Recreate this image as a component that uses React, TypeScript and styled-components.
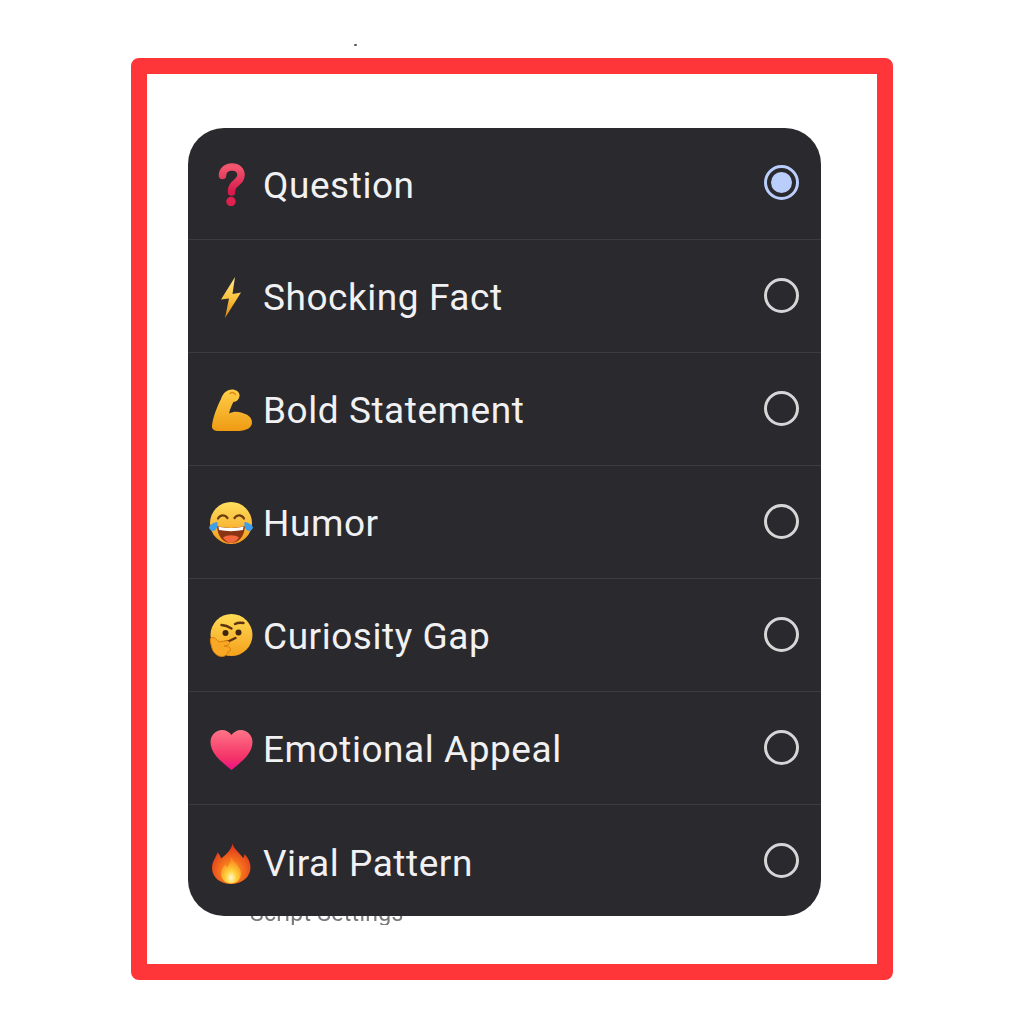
import React from 'react';
import styled, { createGlobalStyle } from 'styled-components';

const GlobalStyle = createGlobalStyle`
  html, body {
    margin: 0;
    padding: 0;
    background: #ffffff;
    font-family: Roboto, "Liberation Sans", sans-serif;
  }
`;

function QuestionEmoji() {
  return (
    <svg width="44" height="44" viewBox="0 0 44 44">
      <defs>
        <linearGradient id="qm" x1="0" y1="0" x2="0" y2="1">
          <stop offset="0" stopColor="#f2566e" />
          <stop offset="1" stopColor="#d81a4c" />
        </linearGradient>
      </defs>
      <path
        d="M13.5 13.5C13.5 8 18 5 23 5c5.5 0 9 3.5 9 8 0 4.5-3 6.5-5.5 8.5-2.5 2-4 3.5-4 8.5"
        fill="none"
        stroke="url(#qm)"
        strokeWidth="7.5"
        strokeLinecap="round"
      />
      <circle cx="22" cy="39.5" r="4.7" fill="#e0204f" />
    </svg>
  );
}

function BoltEmoji() {
  return (
    <svg width="44" height="44" viewBox="0 0 44 44">
      <defs>
        <linearGradient id="bolt" x1="0" y1="0" x2="0" y2="1">
          <stop offset="0" stopColor="#ffe98a" />
          <stop offset="0.55" stopColor="#fbbf3a" />
          <stop offset="1" stopColor="#d9821a" />
        </linearGradient>
      </defs>
      <path d="M26 3 12 25.5l8-1L16 44 32 18.5l-8.5 1.5z" fill="url(#bolt)" />
    </svg>
  );
}

function MuscleEmoji() {
  return (
    <svg width="44" height="44" viewBox="0 0 44 44">
      <defs>
        <linearGradient id="arm" x1="0" y1="0" x2="0" y2="1">
          <stop offset="0" stopColor="#ffcf4a" />
          <stop offset="1" stopColor="#ef9a12" />
        </linearGradient>
      </defs>
      <path
        d="M3 38.5C4 30 8 20 12 12 14 6 18 2.5 23 2.5c4 0 8 2.5 7.5 6.5-.5 4-3.5 6-6 5.8C23 18 21 22 20 26.5c4-2 8-2 12-1 6 1.500 11 4.500 11 10 0 5.500-6 8-13 8.500-8 .5-16 .5-22 0-3.500-.5-5.500-2.500-5-5.500z"
        fill="url(#arm)"
      />
      <path d="M21 6.5c2-1.500 4.500-1 5.500 1" fill="none" stroke="#e08a10" strokeWidth="1.5" strokeLinecap="round" />
    </svg>
  );
}

function LaughEmoji() {
  return (
    <svg width="44" height="44" viewBox="0 0 44 44">
      <defs>
        <linearGradient id="laugh" x1="0" y1="0" x2="0" y2="1">
          <stop offset="0" stopColor="#ffdf5e" />
          <stop offset="1" stopColor="#f59a1c" />
        </linearGradient>
      </defs>
      <circle cx="22" cy="23" r="21" fill="url(#laugh)" />
      <path d="M9 18.500c2.500-4 7-4 9.500-.5M25.500 18c2.500-3.500 7-3.500 9.500.5" fill="none" stroke="#6b3c12" strokeWidth="2.2" strokeLinecap="round" />
      <path d="M8 26c8.500 2.500 19.500 2.500 28 0-.5 10-6 17-14 17S8.500 36 8 26z" fill="#8a3413" />
      <path d="M9.500 26.500c8 2 17 2 25 0l-.5 3.500c-7.500 1.500-16.500 1.500-24 0z" fill="#ffffff" />
      <path d="M14 37.500c4-3 12-3 16 0-2.200 3.500-5 5.500-8 5.500s-5.800-2-8-5.500z" fill="#f2683c" />
      <path d="M0 27c2-3 5-4.500 8.500-5 .5 4-.5 7.500-3.500 8.800C3 31.800.5 30 0 27zM44 27c-2-3-5-4.500-8.500-5-.5 4 .5 7.500 3.500 8.800 2 1 4.500-.8 5-3.800z" fill="#3f9ee8" />
    </svg>
  );
}

function ThinkingEmoji() {
  return (
    <svg width="44" height="44" viewBox="0 0 44 44">
      <defs>
        <linearGradient id="think" x1="0" y1="0" x2="0" y2="1">
          <stop offset="0" stopColor="#ffdc55" />
          <stop offset="1" stopColor="#f5a01c" />
        </linearGradient>
      </defs>
      <circle cx="22.5" cy="22" r="21" fill="url(#think)" />
      <path d="M12.500 12c3.500.2 7 1.500 10 3.500M26 11c2.500-1.300 5.500-1.500 8.500-1" fill="none" stroke="#5c3210" strokeWidth="2.4" strokeLinecap="round" />
      <circle cx="16.500" cy="20" r="3" fill="#3f2410" />
      <circle cx="29.500" cy="19.500" r="3" fill="#3f2410" />
      <path d="M16 29c3.500-.5 7-2 10.500-4" fill="none" stroke="#5c3210" strokeWidth="2.4" strokeLinecap="round" />
      <path
        d="M1.500 26c1-2 3.500-2 5-.5l3.500 3.500 6-1c3-.5 5 .5 4.500 2.500-.3 1.500-3 2-5.500 2.500 3 .5 6 .5 6.500 3 .4 2-1.500 2.500-2.500 2.500.5 2-1 3-2 3-.5 2-4 2.500-7 1.500-4-1.500-6.500-5-7.500-9.500-.7-3.500-1.500-6-1-8z"
        fill="#f9a825"
        stroke="#d9800f"
        strokeWidth="1"
      />
    </svg>
  );
}

function HeartEmoji() {
  return (
    <svg width="44" height="44" viewBox="0 0 44 44">
      <defs>
        <linearGradient id="heart" x1="0" y1="0" x2="0" y2="1">
          <stop offset="0" stopColor="#ff7486" />
          <stop offset="0.7" stopColor="#f43268" />
          <stop offset="1" stopColor="#ee0f8c" />
        </linearGradient>
      </defs>
      <path d="M22.500 44C14.500 37 1.500 28.500 1.500 16 1.500 9 7 4 13 4c4 0 7.500 2 9.500 5 2-3 5.500-5 9.500-5 6 0 11.500 5 11.500 12 0 12.500-13 21-21 28z" fill="url(#heart)" />
    </svg>
  );
}

function FireEmoji() {
  return (
    <svg width="44" height="44" viewBox="0 0 44 44">
      <defs>
        <radialGradient id="flame" cx="0.5" cy="0.7" r="0.7">
          <stop offset="0.3" stopColor="#f9801e" />
          <stop offset="1" stopColor="#dc2a1c" />
        </radialGradient>
        <radialGradient id="core" cx="0.5" cy="0.78" r="0.65">
          <stop offset="0" stopColor="#fff8d4" />
          <stop offset="0.4" stopColor="#ffd23c" />
          <stop offset="1" stopColor="#f98c1f" />
        </radialGradient>
      </defs>
      <path
        d="M23.500 3.500c1.500 6 8 10 10.500 14.500 1-1 1.500-2.500 1.500-4C39.500 18 41.500 23 41.500 27.500 41.500 37 33 44 22 44S3 37 3 28c0-6.500 4-10.500 5.500-15.500 2 1.500 3 3.500 3.500 6 5-4 10.500-8.500 11.500-15z"
        fill="url(#flame)"
      />
      <path d="M22.500 17c1 5 9.500 9 9.500 16.500 0 6-4.500 10-10 10s-10-4-10-10c0-4 2.500-6.500 4-9 1 1 1.500 2 2 3 2-3 4-6 4.500-10.500z" fill="url(#core)" />
    </svg>
  );
}

const options = [
  { label: 'Question', emoji: <QuestionEmoji />, selected: true },
  { label: 'Shocking Fact', emoji: <BoltEmoji /> },
  { label: 'Bold Statement', emoji: <MuscleEmoji /> },
  { label: 'Humor', emoji: <LaughEmoji /> },
  { label: 'Curiosity Gap', emoji: <ThinkingEmoji /> },
  { label: 'Emotional Appeal', emoji: <HeartEmoji /> },
  { label: 'Viral Pattern', emoji: <FireEmoji /> },
];

export default function App() {
  return (
    <Page>
      <GlobalStyle />
      <Speck />
      <Frame>
        <Menu>
          {options.map((option) => (
            <Row key={option.label}>
              <EmojiSlot>{option.emoji}</EmojiSlot>
              <Label>{option.label}</Label>
              <Radio $selected={!!option.selected} />
            </Row>
          ))}
        </Menu>
        <CutOffLine>
          <CutOffText>Script Settings</CutOffText>
        </CutOffLine>
      </Frame>
    </Page>
  );
}

const Page = styled.div`
  width: 1024px;
  height: 1024px;
  padding: 44px 0 0 131px;
  box-sizing: border-box;
  background: #ffffff;
  overflow: hidden;
`;

const Speck = styled.div`
  width: 3px;
  height: 2px;
  margin-left: 223px;
  background: #55565a;
  border-radius: 1px;
`;

const Frame = styled.div`
  width: 762px;
  height: 922px;
  margin-top: 12px;
  padding: 54px 0 0 41px;
  box-sizing: border-box;
  border: 16px solid #fe3539;
  border-radius: 8px;
`;

const Menu = styled.div`
  width: 633px;
  height: 788px;
  background: #29292e;
  border-radius: 36px;
  overflow: hidden;
`;

const Row = styled.div`
  display: flex;
  align-items: center;
  height: 113px;
  padding: 0 22px 0 21px;
  box-sizing: border-box;
  border-bottom: 1px solid #3b3c42;

  &:first-child {
    height: 112px;
  }

  &:last-child {
    border-bottom: none;
  }
`;

const EmojiSlot = styled.div`
  display: flex;
  flex: none;
  width: 44px;
  height: 44px;
  margin-right: 10px;
`;

const Label = styled.div`
  flex: 1;
  margin-top: 4px;
  color: #f1f1f3;
  font-size: 37px;
  line-height: 44px;
  letter-spacing: 0.55px;
`;

const Radio = styled.div<{ $selected: boolean }>`
  position: relative;
  flex: none;
  width: 35px;
  height: 35px;
  margin-bottom: 2px;
  box-sizing: border-box;
  border-radius: 50%;
  border: 3px solid ${(p) => (p.$selected ? '#bacefb' : '#d6d6d6')};

  &::after {
    content: '';
    display: ${(p) => (p.$selected ? 'block' : 'none')};
    position: absolute;
    inset: 4px;
    border-radius: 50%;
    background: #bacefb;
  }
`;

const CutOffLine = styled.div`
  display: flex;
  align-items: flex-end;
  width: 175px;
  height: 9px;
  margin-left: 62px;
  overflow: hidden;
`;

const CutOffText = styled.div`
  flex: none;
  color: #77787c;
  font-size: 23px;
  line-height: 23px;
  letter-spacing: 0.3px;
  white-space: nowrap;
  filter: blur(0.6px);
`;
